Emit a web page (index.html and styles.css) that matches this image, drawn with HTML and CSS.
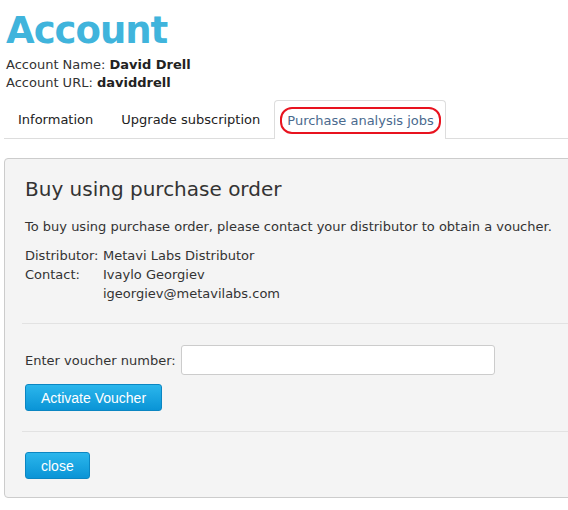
FILE: index.html
```html
<!DOCTYPE html>
<html lang="en">
<head>
    <meta charset="UTF-8">
    <title>Account</title>
    <link rel="stylesheet" href="styles.css">
</head>
<body>

    <header class="account-head">
        <h1>Account</h1>
        <div class="account-info">Account Name: <b>David Drell</b></div>
        <div class="account-info">Account URL: <b>daviddrell</b></div>
    </header>

    <!-- Tabs -->
    <ul class="tabs">
        <li class="tab">Information</li>
        <li class="tab">Upgrade subscription</li>
        <li class="tab active"><span class="marked">Purchase analysis jobs</span></li>
    </ul>

    <!-- Purchase order panel -->
    <section class="panel">
        <h2>Buy using purchase order</h2>
        <p class="intro">To buy using purchase order, please contact your distributor to obtain a voucher.</p>

        <table class="dist">
            <tr>
                <td>Distributor:</td>
                <td>Metavi Labs Distributor</td>
            </tr>
            <tr>
                <td>Contact:</td>
                <td>Ivaylo Georgiev<br>igeorgiev@metavilabs.com</td>
            </tr>
        </table>

        <hr>

        <div class="voucher-row">
            <label for="voucher">Enter voucher number:</label>
            <input type="text" id="voucher">
        </div>
        <button class="btn">Activate Voucher</button>

        <hr>

        <button class="btn">close</button>
    </section>

</body>
</html>
```

FILE: styles.css
```css
html {
    overflow-x: hidden;
}

body {
    font-family: "DejaVu Sans", Verdana, sans-serif;
    font-size: 13px;
    color: #333;
    margin: 0;
    padding: 0 0 0 4px;
}

.account-head {
    padding-left: 2px;
}

.account-head h1 {
    margin: 0;
    padding-top: 6px;
    font-size: 37px;
    letter-spacing: -1px;
    line-height: 50px;
    font-weight: bold;
    color: #40b4dc;
}

.account-info {
    line-height: 18px;
}

.account-info b {
    color: #222;
}

.tabs {
    list-style: none;
    margin: 8px 0 0;
    padding: 0;
    display: flex;
    border-bottom: 1px solid #ddd;
}

.tab {
    padding: 0 13px;
    height: 37px;
    line-height: 37px;
    color: #222;
    border: 1px solid transparent;
    border-bottom: none;
    border-radius: 4px 4px 0 0;
    margin-bottom: -1px;
}

.tab.active {
    background: #fff;
    border-color: #ddd;
    padding: 0 4px 0 5px;
    color: #4a6a8e;
    height: 38px;
}

.marked {
    display: inline-block;
    line-height: 23px;
    padding: 0 5px;
    border: 2px solid #e8131f;
    border-radius: 12px;
    margin-top: 6px;
}

.panel {
    margin: 19px -20px 0 0;
    padding: 18px 20px 18px 20px;
    background: #f4f4f4;
    border: 1px solid #ccc;
    border-radius: 4px;
}

.panel h2 {
    margin: 0;
    font-size: 20px;
    font-weight: normal;
    color: #333;
    line-height: 24px;
}

.intro {
    margin: 17px 0 10px;
    line-height: 18px;
}

.dist {
    border-collapse: collapse;
}

.dist td {
    padding: 0;
    vertical-align: top;
    line-height: 19px;
}

.dist td:first-child {
    padding-right: 2px;
    width: 76px;
}

hr {
    border: none;
    border-top: 1px solid #e2e2e2;
    margin: 20px -3px 20px -3px;
}

.voucher-row {
    display: flex;
    align-items: center;
    gap: 5px;
    margin-top: 21px;
}

.voucher-row input {
    width: 314px;
    height: 30px;
    padding: 0 2px;
    box-sizing: border-box;
    border: 1px solid #ccc;
    border-radius: 3px;
    background: #fff;
}

.btn {
    display: block;
    margin-top: 9px;
    padding: 0 15px;
    height: 27px;
    font-family: "Liberation Sans", Arial, sans-serif;
    font-size: 14px;
    color: #fff;
    background: linear-gradient(#2bb6ec, #0a94d6);
    border: 1px solid #0b86c2;
    border-radius: 3px;
}
```
